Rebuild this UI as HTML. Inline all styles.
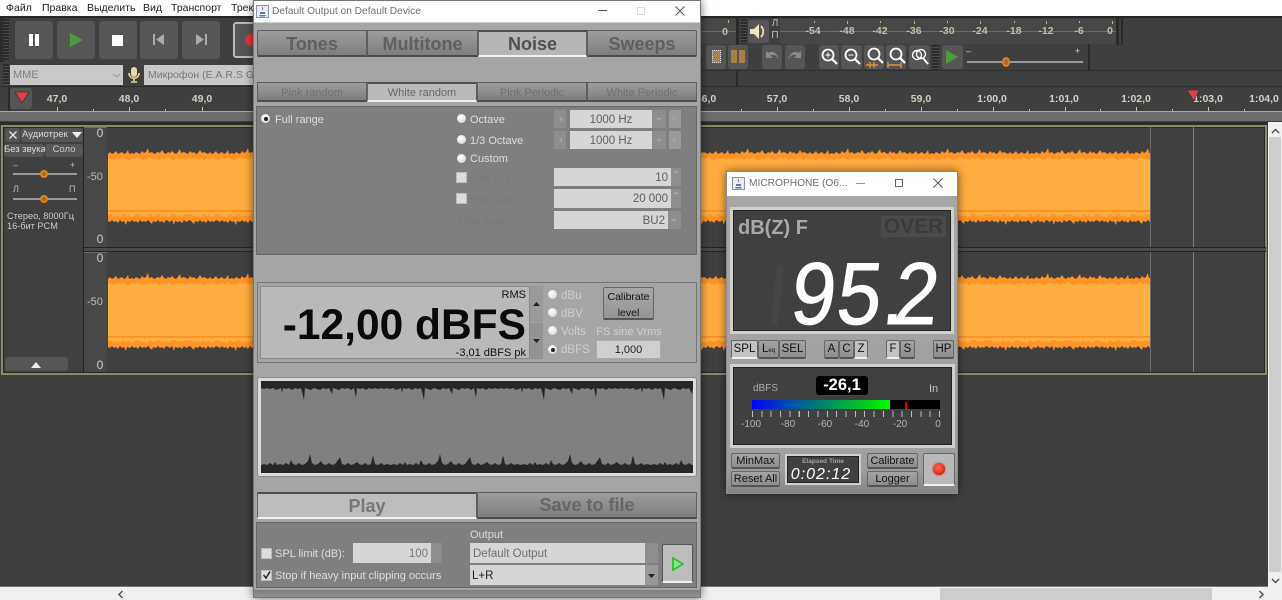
<!DOCTYPE html>
<html><head><meta charset="utf-8"><title>Audacity and REW</title>
<style>
html,body{margin:0;padding:0;width:1282px;height:600px;overflow:hidden;background:#3f3f3f}
body{position:relative;font-family:"Liberation Sans","Noto Sans CJK SC",sans-serif;font-size:11px}
.a{position:absolute;box-sizing:border-box}
.t{position:absolute;white-space:nowrap;line-height:14px}
.dlg .t{margin-top:1px}
.c{transform:translateX(-50%)}
.tb{background:#565656;border-radius:3px}
.lt{color:#d4cfc4;font-size:10.5px;font-weight:bold}
.tab{position:absolute;box-sizing:border-box;background:linear-gradient(#9d9d9d,#7e7e7e);border:1px solid #5e5e5e;border-bottom:2px solid #4c4c4c;text-align:center;color:#606060;font-weight:bold}
.tab.on{background:#b6b6b6;border-top:2px solid #4e4e4e;border-left:1px solid #666;border-bottom:2px solid #f2f2f2}
.sub{font-weight:normal;font-size:11px;color:#6f6f6f}
.sub.on{color:#686868;background:#bababa}
.f{position:absolute;box-sizing:border-box;background:#d6d6d6;color:#5f5f5f;line-height:20px;text-align:right;padding-right:3px;font-size:11.5px}
.g{position:absolute;box-sizing:border-box;background:#8d8d8d}
.rad{position:absolute;width:9px;height:9px;border-radius:50%;background:radial-gradient(circle at 40% 35%,#fff,#cfcfcf)}
.rad.s:after{content:"";position:absolute;left:2.5px;top:2.5px;width:4px;height:4px;border-radius:50%;background:#222}
.chk{position:absolute;width:9px;height:9px;background:#dcdcdc;border:1px solid #bbb;box-sizing:content-box}
.mb{position:absolute;box-sizing:border-box;background:linear-gradient(#a4a4a4,#8e8e8e);border:1px solid #666;border-bottom:2px solid #555;border-radius:2px;color:#111;text-align:center;font-size:11.5px;line-height:17px}
.mb.on{background:#c2c2c2;border-bottom:2px solid #eee}
.frm{position:absolute;box-sizing:border-box;background:#404040;border:1px solid #222;outline:2px solid #d4d4d4;outline-offset:0}
svg{position:absolute;display:block;overflow:visible}
.shadow{box-shadow:0 0 9px rgba(0,0,0,.55)}
</style></head><body>

<!-- menu -->
<div class="a" style="left:0;top:0;width:1282px;height:16px;background:#fff"></div>
<div class="t" style="left:6px;top:1px;font-size:10.5px;color:#222">Файл</div>
<div class="t" style="left:42px;top:1px;font-size:10.5px;color:#222">Правка</div>
<div class="t" style="left:87px;top:1px;font-size:10.5px;color:#222">Выделить</div>
<div class="t" style="left:143px;top:1px;font-size:10.5px;color:#222">Вид</div>
<div class="t" style="left:171px;top:1px;font-size:10.5px;color:#222">Транспорт</div>
<div class="t" style="left:231px;top:1px;font-size:10.5px;color:#222">Трек</div>
<div class="a" style="left:0;top:16px;width:1282px;height:2px;background:#262626"></div>

<!-- left toolbar -->
<div class="a" style="left:0;top:18px;width:4px;height:44px;background:#2c2c2c"></div>
<div class="a" style="left:3px;top:19px;width:6px;height:41px;background:repeating-linear-gradient(#2a2a2a 0 2px,#4c4c4c 2px 3px)"></div>
<div class="a tb" style="left:15px;top:21px;width:38px;height:38px"></div>
<div class="a" style="left:29px;top:34px;width:4px;height:12px;background:#fff"></div><div class="a" style="left:35px;top:34px;width:4px;height:12px;background:#fff"></div>
<div class="a tb" style="left:57px;top:21px;width:38px;height:38px"></div>
<svg style="left:70px;top:33px" width="14" height="14"><path d="M0 0L13 7L0 14Z" fill="#4f9a3e"/></svg>
<div class="a tb" style="left:99px;top:21px;width:38px;height:38px"></div>
<div class="a" style="left:112px;top:35px;width:11px;height:11px;background:#fff"></div>
<div class="a tb" style="left:140px;top:21px;width:38px;height:38px"></div>
<svg style="left:153px;top:34px" width="12" height="12"><path d="M0 0h2v11h-2zM11 0v11L3 5.5Z" fill="#aaa"/></svg>
<div class="a tb" style="left:182px;top:21px;width:38px;height:38px"></div>
<svg style="left:196px;top:34px" width="12" height="12"><path d="M9 0h2v11h-2zM0 0v11L8 5.5Z" fill="#aaa"/></svg>
<div class="a tb" style="left:233px;top:22px;width:30px;height:36px;border:2px solid #bbb"></div>
<div class="a" style="left:245px;top:34px;width:12px;height:12px;border-radius:50%;background:#e5343a"></div>

<div class="a" style="left:3px;top:64px;width:6px;height:21px;background:repeating-linear-gradient(#2a2a2a 0 2px,#4c4c4c 2px 3px)"></div>
<div class="a" style="left:10px;top:65px;width:113px;height:20px;background:#c9c9c9"></div>
<div class="t" style="left:13px;top:68px;color:#7c7c7c;font-size:11px">MME</div>
<svg style="left:112px;top:73px" width="9" height="5"><path d="M1 1L4.500 4L8 1" fill="none" stroke="#999"/></svg>
<svg style="left:127px;top:66px" width="14" height="18"><rect x="4" y="1" width="6" height="10" rx="3" fill="#e8d9a8"/><path d="M2 7c0 7 10 7 10 0M7 12v3M4 16h6" stroke="#e8d9a8" stroke-width="1.600" fill="none"/></svg>
<div class="a" style="left:144px;top:65px;width:109px;height:20px;background:#c9c9c9"></div>
<div class="t" style="left:148px;top:68px;color:#777;font-size:10.5px">Микрофон (E.A.R.S Gai</div>
<div class="a" style="left:0;top:86px;width:1282px;height:1px;background:#2c2c2c"></div>

<!-- ruler -->
<div class="a" style="left:8px;top:87px;width:2px;height:24px;background:#2a2a2a"></div>
<div class="a tb" style="left:10px;top:88px;width:22px;height:21px"></div>
<svg style="left:15px;top:92px" width="14" height="11"><path d="M0 0H14L7 11Z" fill="#d9434a" stroke="#222" stroke-width=".6"/></svg>
<div class="t lt c" style="left:57px;top:92px">47,0</div>
<div class="t lt c" style="left:129px;top:92px">48,0</div>
<div class="t lt c" style="left:202px;top:92px">49,0</div>
<div class="t lt c" style="left:706px;top:92px">56,0</div>
<div class="t lt c" style="left:777px;top:92px">57,0</div>
<div class="t lt c" style="left:849px;top:92px">58,0</div>
<div class="t lt c" style="left:921px;top:92px">59,0</div>
<div class="t lt c" style="left:992px;top:92px">1:00,0</div>
<div class="t lt c" style="left:1064px;top:92px">1:01,0</div>
<div class="t lt c" style="left:1136px;top:92px">1:02,0</div>
<div class="t lt c" style="left:1208px;top:92px">1:03,0</div>
<div class="t lt c" style="left:1264px;top:92px">1:04,0</div>
<svg style="left:0;top:106px" width="1282" height="5"><path stroke="#cfc5a8" stroke-width="1" d="M57.500 1v4M129.500 1v4M202.500 1v4M777.500 1v4M849.500 1v4M921.500 1v4M993.500 1v4M1065.500 1v4M1136.500 1v4M1208.500 1v4M93.500 3v2M165.500 3v2M741.500 3v2M813.500 3v2M885.500 3v2M957.500 3v2M1029.500 3v2M1100.500 3v2M1172.500 3v2M1244.500 3v2"/></svg>
<div class="a" style="left:0;top:111px;width:1282px;height:1px;background:#b5a98a"></div>
<div class="a" style="left:0;top:112px;width:1282px;height:9px;background:#6c6c6c"></div>
<svg style="left:1187px;top:90px" width="13" height="12"><path d="M0 0H12L7 11Z" fill="#d9434a" stroke="#222" stroke-width=".5"/></svg>

<!-- right toolbar -->
<div class="a" style="left:736px;top:16px;width:3px;height:29px;background:#2a2a2a"></div>
<div class="a" style="left:741px;top:19px;width:6px;height:25px;background:repeating-linear-gradient(#2a2a2a 0 2px,#4c4c4c 2px 3px)"></div>
<div class="a" style="left:700px;top:19px;width:36px;height:25px;background:#474747"></div>
<div class="a" style="left:700px;top:31px;width:36px;height:1px;background:#6b6b6b"></div>
<div class="t lt c" style="left:725px;top:25px;color:#c9bda0">0</div>
<div class="a tb" style="left:748px;top:20px;width:21px;height:23px"></div>
<svg style="left:750px;top:23px" width="17" height="17"><path d="M0 6h4L9 1v15L4 11H0Z" fill="#efe5c4"/><path d="M11 3c3 3 3 8 0 11" stroke="#efe5c4" stroke-width="1.700" fill="none"/></svg>
<div class="t c" style="left:775px;top:17px;color:#cdbf9e;font-size:10px">Л</div>
<div class="t c" style="left:775px;top:29px;color:#cdbf9e;font-size:10px">П</div>
<div class="a" style="left:780px;top:19px;width:336px;height:25px;background:#474747"></div>
<div class="a" style="left:780px;top:31px;width:336px;height:1px;background:#6b6b6b"></div>
<div class="a" style="left:1116px;top:18px;width:3px;height:27px;background:#2a2a2a"></div>
<div class="a" style="left:1121px;top:18px;width:2px;height:27px;background:#2a2a2a"></div>
<svg style="left:0;top:0" width="1282" height="30"><path stroke="#bfb49a" d="M814.500 21v2M847.500 21v3M880.500 21v2M914.500 21v3M947.500 21v2M980.500 21v3M1014.500 21v2M1046.500 21v3M1079.500 21v2M1112.500 21v3M728.500 20v3"/></svg>
<div class="t lt c" style="left:813px;top:24px;color:#c9bda0">-54</div>
<div class="t lt c" style="left:847px;top:24px;color:#c9bda0">-48</div>
<div class="t lt c" style="left:880px;top:24px;color:#c9bda0">-42</div>
<div class="t lt c" style="left:914px;top:24px;color:#c9bda0">-36</div>
<div class="t lt c" style="left:947px;top:24px;color:#c9bda0">-30</div>
<div class="t lt c" style="left:980px;top:24px;color:#c9bda0">-24</div>
<div class="t lt c" style="left:1014px;top:24px;color:#c9bda0">-18</div>
<div class="t lt c" style="left:1046px;top:24px;color:#c9bda0">-12</div>
<div class="t lt c" style="left:1079px;top:24px;color:#c9bda0">-6</div>
<div class="t lt c" style="left:1110px;top:24px;color:#c9bda0">0</div>

<div class="a tb" style="left:706px;top:45px;width:20px;height:24px"></div>
<div class="a" style="left:712px;top:50px;width:9px;height:13px;background:#a8804a;border:1px dotted #ddd"></div>
<div class="a tb" style="left:728px;top:45px;width:20px;height:24px"></div>
<div class="a" style="left:731px;top:50px;width:6px;height:13px;background:#a8804a"></div><div class="a" style="left:739px;top:50px;width:6px;height:13px;background:#a8804a"></div>
<div class="a tb" style="left:762px;top:45px;width:20px;height:24px"></div>
<svg style="left:763px;top:48px" width="18" height="16"><path d="M3 3v7h7L7.500 7.500C10 6 14 7 16 12 15 5 9 2 5.500 5Z" fill="#8a8a8a"/></svg>
<div class="a tb" style="left:785px;top:45px;width:20px;height:24px"></div>
<svg style="left:786px;top:48px" width="18" height="16"><path d="M15 3v7H8l2.500-2.500C8 6 4 7 2 12 3 5 9 2 12.500 5Z" fill="#8a8a8a"/></svg>
<div class="a tb" style="left:819px;top:45px;width:20px;height:24px"></div>
<svg style="left:820px;top:47px" width="19" height="20"><circle cx="8" cy="8" r="5.500" fill="none" stroke="#fff" stroke-width="1.800"/><path d="M12 12l5 5" stroke="#fff" stroke-width="2.200"/><path d="M5.500 8h5M8 5.500v5" stroke="#fff"/></svg>
<div class="a tb" style="left:841px;top:45px;width:21px;height:24px"></div>
<svg style="left:843px;top:47px" width="19" height="20"><circle cx="8" cy="8" r="5.500" fill="none" stroke="#fff" stroke-width="1.800"/><path d="M12 12l5 5" stroke="#fff" stroke-width="2.200"/><path d="M5.500 8h5" stroke="#fff"/></svg>
<div class="a tb" style="left:864px;top:45px;width:20px;height:24px"></div>
<svg style="left:865px;top:47px" width="19" height="21"><circle cx="9" cy="7" r="5.500" fill="none" stroke="#fff" stroke-width="1.800"/><path d="M13 11l5 5" stroke="#fff" stroke-width="2.200"/><path d="M1 18h12M5 15v6M9 15v6" stroke="#e8902c" stroke-width="1.400"/></svg>
<div class="a tb" style="left:886px;top:45px;width:20px;height:24px"></div>
<svg style="left:887px;top:47px" width="19" height="21"><circle cx="9" cy="7" r="5.500" fill="none" stroke="#fff" stroke-width="1.800"/><path d="M13 11l5 5" stroke="#fff" stroke-width="2.200"/><path d="M1 18h13M1 15v6M14 15v6" stroke="#e8902c" stroke-width="1.400"/></svg>
<div class="a tb" style="left:909px;top:45px;width:21px;height:24px"></div>
<svg style="left:911px;top:48px" width="18" height="18"><circle cx="6" cy="7" r="4.500" fill="none" stroke="#fff" stroke-width="1.400"/><circle cx="10" cy="6" r="4.500" fill="none" stroke="#fff" stroke-width="1.400"/><path d="M12 10l5 6" stroke="#fff" stroke-width="2"/></svg>
<div class="a" style="left:932px;top:45px;width:7px;height:25px;background:repeating-linear-gradient(#2a2a2a 0 2px,#4c4c4c 2px 3px)"></div>
<div class="a tb" style="left:942px;top:45px;width:21px;height:24px"></div>
<svg style="left:946px;top:50px" width="14" height="14"><path d="M0 0L12 7L0 14Z" fill="#4f9a3e"/></svg>
<div class="t" style="left:966px;top:44px;color:#ccc;font-size:9px">–</div>
<div class="t" style="left:1075px;top:44px;color:#ccc;font-size:9px">+</div>
<div class="a" style="left:967px;top:61px;width:116px;height:2px;background:#9a9a9a"></div>
<div class="a" style="left:1002px;top:57px;width:8px;height:10px;border-radius:50%;background:#a56a20;border:2px solid #e0801e"></div>
<div class="a" style="left:1088px;top:44px;width:2px;height:26px;background:#2a2a2a"></div>
<div class="a" style="left:736px;top:70px;width:2px;height:17px;background:#2a2a2a"></div>
<div class="a" style="left:701px;top:70px;width:581px;height:1px;background:#2e2e2e"></div>
<div class="a" style="left:701px;top:86px;width:581px;height:1px;background:#2e2e2e"></div>

<!-- track -->
<div class="a" style="left:0;top:122px;width:1282px;height:3px;background:#2c2c2c"></div>
<div class="a" style="left:1px;top:125px;width:1266px;height:250px;background:#404040;border:2px solid #8b8b62;outline:1px solid #2a2a2a;outline-offset:-3px"></div>
<div class="a" style="left:83px;top:127px;width:1px;height:246px;background:#222"></div>
<div class="a" style="left:84px;top:127px;width:23px;height:120px;background:#484848;border-top:1px solid #6a6a6a"></div>
<div class="a" style="left:84px;top:252px;width:23px;height:120px;background:#484848;border-top:1px solid #6a6a6a"></div>
<div class="a" style="left:84px;top:247px;width:1182px;height:1px;background:#242424"></div>
<div class="a" style="left:84px;top:248px;width:1182px;height:3px;background:#4a4a4a"></div>
<div class="a" style="left:84px;top:251px;width:1182px;height:1px;background:#242424"></div>
<div class="a tb" style="left:5px;top:128px;width:15px;height:14px"></div>
<svg style="left:9px;top:131px" width="8" height="8"><path d="M.5.500l7 7M7.500.500l-7 7" stroke="#e8e8e8" stroke-width="1.300"/></svg>
<div class="a tb" style="left:21px;top:128px;width:62px;height:14px"></div>
<div class="t" style="left:22px;top:128px;color:#ddd;font-size:9.500px">Аудиотрек</div>
<svg style="left:72px;top:132px" width="10" height="6"><path d="M0 0H10L5 6Z" fill="#eee"/></svg>
<div class="a tb" style="left:4px;top:144px;width:40px;height:13px"></div>
<div class="t" style="left:4px;top:143px;color:#ddd;font-size:9.500px">Без звука</div>
<div class="a tb" style="left:45px;top:144px;width:38px;height:13px"></div>
<div class="t c" style="left:64px;top:143px;color:#ccc;font-size:9.500px">Соло</div>
<div class="t" style="left:13px;top:158px;color:#bbb;font-size:9px">–</div><div class="t" style="left:70px;top:158px;color:#bbb;font-size:9px">+</div>
<div class="a" style="left:13px;top:173px;width:64px;height:2px;background:#9a9a9a"></div>
<div class="a" style="left:40px;top:170px;width:8px;height:8px;border-radius:50%;background:#a56a20;border:2px solid #e0801e"></div>
<div class="t" style="left:13px;top:182px;color:#bbb;font-size:9px">Л</div><div class="t" style="left:69px;top:182px;color:#bbb;font-size:9px">П</div>
<div class="a" style="left:13px;top:198px;width:64px;height:2px;background:#9a9a9a"></div>
<div class="a" style="left:40px;top:195px;width:8px;height:8px;border-radius:50%;background:#a56a20;border:2px solid #e0801e"></div>
<div class="t" style="left:7px;top:209px;color:#ccc;font-size:9.200px">Стерео, 8000Гц</div>
<div class="t" style="left:7px;top:219px;color:#ccc;font-size:9.200px">16-бит PCM</div>
<div class="a tb" style="left:5px;top:357px;width:63px;height:14px"></div>
<svg style="left:31px;top:362px" width="11" height="6"><path d="M0 6H10L5 0Z" fill="#eee"/></svg>

<div class="t c" style="left:100px;top:126px;color:#ccc;font-size:12px">0</div>
<div class="t" style="left:87px;top:170px;color:#bbb;font-size:11px">-50</div>
<div class="t c" style="left:100px;top:232px;color:#ccc;font-size:12px">0</div>
<div class="t c" style="left:100px;top:251px;color:#ccc;font-size:12px">0</div>
<div class="t" style="left:87px;top:295px;color:#bbb;font-size:11px">-50</div>
<div class="t c" style="left:100px;top:358px;color:#ccc;font-size:12px">0</div>

<svg style="left:0;top:0" width="1282" height="600">
<defs>
<pattern id="jt" width="100" height="16" patternUnits="userSpaceOnUse">
<polygon fill="#ff9326" points="0,16 0,7 2,5 4,7 6,6 8,4 10,7 12,6 14,5 16,7 18,6 20,3 21,7 24,6 26,7 28,5 30,6 32,7 34,4 36,6 38,5 40,1 41,6 44,5 46,7 48,6 50,5 52,6 54,3 56,6 58,7 60,5 62,6 64,4 66,6 68,7 70,5 72,2 73,6 76,5 78,6 80,7 82,4 84,6 86,5 88,7 90,6 92,3 94,6 96,5 98,6 100,7 100,16"/>
</pattern>
<pattern id="mt" width="90" height="8" patternUnits="userSpaceOnUse">
<polygon fill="#ffae40" points="0,8 0,3 3,2 6,4 9,2 12,3 15,1 18,3 21,4 24,2 27,3 30,1 33,3 36,4 39,3 42,1 45,3 48,2 51,4 54,2 57,3 60,1 63,3 66,4 69,2 72,3 75,2 78,4 81,2 84,3 87,2 90,3 90,8"/>
</pattern>
<pattern id="mb" width="80" height="8" patternUnits="userSpaceOnUse">
<polygon fill="#ffae40" points="0,0 0,3 3,2 6,4 9,3 12,5 15,2 18,4 21,3 24,5 27,3 30,2 33,4 36,3 39,5 42,2 45,4 48,3 51,2 54,4 57,3 60,5 63,3 66,2 69,4 72,3 75,4 78,2 80,3 80,0"/>
</pattern>
<pattern id="jb" width="110" height="16" patternUnits="userSpaceOnUse">
<polygon fill="#ff9326" points="0,0 0,11 2,12 4,10 6,12 8,11 10,13 12,10 14,12 16,11 18,15 19,11 22,12 24,10 26,12 28,11 30,13 32,10 34,12 36,11 38,12 40,10 42,12 44,14 45,11 48,12 50,10 52,12 54,11 56,13 58,10 60,11 62,12 64,10 66,15 67,11 70,12 72,11 74,13 76,10 78,12 80,11 82,10 84,12 86,14 87,11 90,12 92,10 94,12 96,11 98,13 100,10 102,12 104,11 106,12 108,10 110,11 110,0"/>
</pattern>
<pattern id="dt" width="120" height="22" patternUnits="userSpaceOnUse">
<polygon fill="#262626" points="0,0 0,7 3,8 6,7 9,8 12,7 15,9 18,8 20,7 21,12 22,7 25,8 28,7 31,9 34,7 37,8 40,7 43,19 44,7 47,8 50,9 53,7 56,8 59,9 62,7 65,8 68,7 71,13 72,7 75,8 78,9 81,7 84,8 87,7 90,9 93,7 95,17 96,7 99,8 102,7 105,9 108,7 111,8 114,7 117,8 120,7 120,0"/>
</pattern>
<pattern id="db" width="130" height="22" patternUnits="userSpaceOnUse">
<polygon fill="#262626" points="0,22 0,14 3,13 6,14 9,12 12,14 14,11 16,14 19,13 22,14 25,12 28,14 30,9 32,13 35,14 38,12 41,14 44,13 47,10 49,3 51,12 54,14 57,13 60,10 62,13 65,14 68,12 71,14 74,13 77,9 79,6 81,13 84,14 87,12 90,14 93,13 96,11 98,13 101,14 104,12 107,14 110,13 112,4 114,13 117,14 120,12 123,14 126,13 130,14 130,22"/>
</pattern>
</defs>
<rect x="108" y="158" width="1042" height="56" fill="#ffae40"/>
<g transform="translate(108,147)"><rect width="1042" height="16" fill="url(#jt)"/></g>
<g transform="translate(108,156)"><rect width="1042" height="8" fill="url(#mt)"/></g>
<g transform="translate(108,210)"><rect width="1042" height="16" fill="url(#jb)"/></g>
<g transform="translate(108,212)"><rect width="1042" height="8" fill="url(#mb)"/></g>
<rect x="108" y="283" width="1042" height="57" fill="#ffae40"/>
<g transform="translate(108,272)"><rect width="1042" height="16" fill="url(#jt)"/></g>
<g transform="translate(108,281)"><rect width="1042" height="8" fill="url(#mt)"/></g>
<g transform="translate(108,336)"><rect width="1042" height="16" fill="url(#jb)"/></g>
<g transform="translate(108,338)"><rect width="1042" height="8" fill="url(#mb)"/></g>
<path d="M1150.500 127V247M1150.500 252V372" stroke="#6d6d6d"/>
<path d="M1193.500 127V247M1193.500 252V372" stroke="#8f7a7a"/>
</svg>

<!-- scrollbars -->
<div class="a" style="left:1268px;top:122px;width:14px;height:465px;background:#f0f0f0"></div>
<div class="a" style="left:1269px;top:137px;width:12px;height:435px;background:#cdcdcd"></div>
<svg style="left:1271px;top:128px" width="9" height="6"><path d="M1 5L4.500 1.500L8 5" stroke="#555" stroke-width="1.500" fill="none"/></svg>
<svg style="left:1271px;top:578px" width="9" height="6"><path d="M1 1L4.500 4.500L8 1" stroke="#555" stroke-width="1.500" fill="none"/></svg>
<div class="a" style="left:0;top:587px;width:1268px;height:13px;background:#f0f0f0"></div>
<div class="a" style="left:0;top:586px;width:1268px;height:1px;background:#777"></div>
<div class="a" style="left:1268px;top:587px;width:14px;height:13px;background:#f0f0f0"></div>
<div class="a" style="left:940px;top:588px;width:272px;height:12px;background:#cdcdcd"></div>
<svg style="left:117px;top:590px" width="7" height="9"><path d="M5.500 1L2 4.500L5.500 8" stroke="#555" stroke-width="1.500" fill="none"/></svg>
<svg style="left:1258px;top:590px" width="7" height="9"><path d="M1.500 1L5 4.500L1.500 8" stroke="#555" stroke-width="1.500" fill="none"/></svg>

<div class="dlg">
<!-- Generator window -->
<div class="a shadow" style="left:253px;top:0;width:448px;height:598px;background:#a5a5a5;border:1px solid #777"></div>
<div class="a" style="left:254px;top:1px;width:446px;height:21px;background:#fff"></div>
<div class="a" style="left:254px;top:22px;width:446px;height:1px;background:#d0d0d0"></div>
<svg style="left:256px;top:5px" width="13" height="13"><rect x=".5" y=".5" width="12" height="12" fill="#e9eef6" stroke="#8a93a5"/><path d="M3 10h7l-1 1.500H4ZM4 9h5V7H4Z" fill="#4a7fb5"/><path d="M6 2c1 1 0 2 1 3" stroke="#d8632b" fill="none"/></svg>
<div class="t" style="left:272px;top:4px;color:#707070;font-size:10.200px">Default Output on Default Device</div>
<div class="a" style="left:598px;top:10px;width:9px;height:1px;background:#555"></div>
<div class="a" style="left:637px;top:7px;width:8px;height:8px;border:1px solid #ddd"></div>
<svg style="left:675px;top:6px" width="10" height="10"><path d="M.5.500l9 9M9.500.500l-9 9" stroke="#555"/></svg>

<div class="tab" style="left:257px;top:30px;width:110px;height:27px;font-size:18px;line-height:27px;border-radius:2px 0 0 2px">Tones</div>
<div class="tab" style="left:367px;top:30px;width:111px;height:27px;font-size:18px;line-height:27px">Multitone</div>
<div class="tab on" style="left:478px;top:30px;width:109px;height:27px;font-size:18px;line-height:25px;color:#505050">Noise</div>
<div class="tab" style="left:587px;top:30px;width:110px;height:27px;font-size:18px;line-height:27px;border-radius:0 2px 2px 0">Sweeps</div>
<div class="tab sub" style="left:257px;top:82px;width:110px;height:20px;line-height:20px">Pink random</div>
<div class="tab sub on" style="left:367px;top:82px;width:110px;height:20px;line-height:18px">White random</div>
<div class="tab sub" style="left:477px;top:82px;width:110px;height:20px;line-height:20px">Pink Periodic</div>
<div class="tab sub" style="left:587px;top:82px;width:110px;height:20px;line-height:20px">White Periodic</div>

<div class="a" style="left:256px;top:106px;width:441px;height:149px;background:#7f7f7f;border:1px solid #666"></div>
<div class="rad s" style="left:261px;top:114px"></div>
<div class="t" style="left:275px;top:112px;color:#dedede">Full range</div>
<div class="rad" style="left:457px;top:114px"></div>
<div class="t" style="left:470px;top:112px;color:#dedede">Octave</div>
<div class="rad" style="left:457px;top:135px"></div>
<div class="t" style="left:470px;top:133px;color:#dedede">1/3 Octave</div>
<div class="rad" style="left:457px;top:154px"></div>
<div class="t" style="left:470px;top:151px;color:#dedede">Custom</div>
<div class="chk" style="left:456px;top:172px"></div>
<div class="t" style="left:470px;top:171px;color:#797979">Low Cut</div>
<div class="chk" style="left:456px;top:193px"></div>
<div class="t" style="left:470px;top:192px;color:#797979">High Cut</div>
<div class="t" style="left:457px;top:213px;color:#797979">Filter type</div>

<div class="g" style="left:554px;top:110px;width:12px;height:18px"></div>
<div class="f" style="left:570px;top:110px;width:82px;height:18px;text-align:center;padding:0">1000 Hz</div>
<div class="g" style="left:652px;top:110px;width:14px;height:18px"></div>
<div class="g" style="left:669px;top:110px;width:12px;height:18px;background:#9a9a9a"></div>
<div class="g" style="left:554px;top:131px;width:12px;height:18px"></div>
<div class="f" style="left:570px;top:131px;width:82px;height:18px;text-align:center;padding:0">1000 Hz</div>
<div class="g" style="left:652px;top:131px;width:14px;height:18px"></div>
<div class="g" style="left:669px;top:131px;width:12px;height:18px;background:#9a9a9a"></div>
<div class="f" style="left:554px;top:168px;width:117px;height:18px">10</div>
<div class="g" style="left:671px;top:168px;width:10px;height:18px"></div>
<div class="f" style="left:554px;top:189px;width:117px;height:19px">20 000</div>
<div class="g" style="left:671px;top:189px;width:10px;height:19px"></div>
<div class="f" style="left:554px;top:211px;width:114px;height:18px">BU2</div>
<div class="g" style="left:668px;top:211px;width:13px;height:18px"></div>
<svg style="left:0;top:0" width="700" height="240"><path fill="#a6a6a6" d="M562 116v6l-3-3ZM656 118h6l-3 3ZM673 116v6l3-3ZM562 137v6l-3-3ZM656 139h6l-3 3ZM673 137v6l3-3ZM673 173h6l-3-3ZM673 194h6l-3-3ZM671 219h6l-3 3Z"/></svg>

<!-- level -->
<div class="a" style="left:257px;top:282px;width:440px;height:81px;border:1px solid #777"></div>
<div class="a" style="left:260px;top:286px;width:270px;height:73px;background:#b9b9b9;border:1px solid #8a8a8a"></div>
<div class="t" style="right:756px;top:287px;color:#111;font-size:11px">RMS</div>
<div class="t" style="right:756px;top:300px;color:#0a0a0a;font-size:42.500px;font-weight:bold;line-height:50px">-12,00 dBFS</div>
<div class="t" style="right:756px;top:345px;color:#111;font-size:11px">-3,01 dBFS pk</div>
<div class="g" style="left:530px;top:286px;width:13px;height:36px;background:#9a9a9a"></div>
<div class="g" style="left:530px;top:323px;width:13px;height:36px;background:#939393"></div>
<svg style="left:533px;top:302px" width="7" height="4"><path d="M0 4H7L3.500 0Z" fill="#222"/></svg>
<svg style="left:533px;top:339px" width="7" height="4"><path d="M0 0H7L3.500 4Z" fill="#222"/></svg>
<div class="rad" style="left:548px;top:290px"></div><div class="t" style="left:561px;top:288px;color:#d0d0d0;font-size:11.500px">dBu</div>
<div class="rad" style="left:548px;top:308px"></div><div class="t" style="left:561px;top:306px;color:#d0d0d0;font-size:11.500px">dBV</div>
<div class="rad" style="left:548px;top:326px"></div><div class="t" style="left:561px;top:324px;color:#d0d0d0;font-size:11.500px">Volts</div>
<div class="rad s" style="left:548px;top:345px"></div><div class="t" style="left:561px;top:342px;color:#d0d0d0;font-size:11.500px">dBFS</div>
<div class="mb" style="left:603px;top:287px;width:51px;height:33px;line-height:16px;padding-top:1px;color:#111;font-size:10.500px;background:linear-gradient(#a8a8a8,#959595)">Calibrate<br>level</div>
<div class="t c" style="left:629px;top:324px;color:#cfcfcf;font-size:11px">FS sine Vrms</div>
<div class="a" style="left:596px;top:340px;width:65px;height:19px;background:#cfcfcf;border:1px solid #aaa;color:#222;text-align:center;line-height:18px;font-size:11px">1,000</div>

<!-- waveform -->
<div class="a" style="left:258px;top:378px;width:438px;height:98px;background:#dcdcdc;border-radius:2px;box-shadow:0 0 0 1px #8a8a8a"></div>
<svg style="left:0;top:0" width="1282" height="600">
<rect x="261" y="381" width="432" height="92" fill="#808080"/>
<g transform="translate(261,381)"><rect width="432" height="22" fill="url(#dt)"/></g>
<g transform="translate(261,451)"><rect width="432" height="22" fill="url(#db)"/></g>
</svg>

<div class="tab on" style="left:257px;top:492px;width:220px;height:27px;font-size:18px;line-height:24px;color:#777;background:#bdbdbd">Play</div>
<div class="tab" style="left:477px;top:492px;width:220px;height:27px;font-size:18px;line-height:25px;color:#666">Save to file</div>

<div class="a" style="left:256px;top:522px;width:441px;height:66px;background:#7f7f7f;border:1px solid #666"></div>
<div class="chk" style="left:261px;top:548px"></div>
<div class="t" style="left:275px;top:546px;color:#dedede">SPL limit (dB):</div>
<div class="f" style="left:353px;top:543px;width:78px;height:20px;line-height:22px;color:#777">100</div>
<div class="g" style="left:431px;top:543px;width:11px;height:20px"></div>
<div class="chk" style="left:261px;top:570px"></div>
<svg style="left:262px;top:570px" width="10" height="10"><path d="M1.500 5l2.500 3L8 1.500" stroke="#222" stroke-width="1.500" fill="none"/></svg>
<div class="t" style="left:275px;top:568px;color:#dedede">Stop if heavy input clipping occurs</div>
<div class="t" style="left:470px;top:527px;color:#dedede">Output</div>
<div class="f" style="left:470px;top:543px;width:175px;height:20px;line-height:22px;text-align:left;padding-left:3px;color:#707070">Default Output</div>
<div class="g" style="left:645px;top:543px;width:13px;height:20px"></div>
<div class="f" style="left:470px;top:565px;width:175px;height:20px;line-height:22px;text-align:left;padding-left:2px;color:#222">L+R</div>
<div class="g" style="left:645px;top:565px;width:13px;height:20px;background:#999"></div>
<svg style="left:648px;top:574px" width="7" height="4"><path d="M0 0H7L3.500 4Z" fill="#222"/></svg>
<div class="a" style="left:662px;top:544px;width:31px;height:39px;background:#bdbdbd;border:1px solid #555;border-bottom:2px solid #f2f2f2;border-radius:2px"></div>
<svg style="left:672px;top:557px" width="13" height="14"><path d="M1 1L11 7L1 13Z" fill="#8fe08a" stroke="#1cc21c" stroke-width="1.600"/></svg>
<div class="a" style="left:254px;top:590px;width:446px;height:7px;background:linear-gradient(#7e7e7e,#939393)"></div>

<!-- Meter window -->
<div class="a shadow" style="left:726px;top:171px;width:232px;height:323px;background:linear-gradient(#a8a8a8,#9f9f9f 92%,#858585);border:1px solid #8a8a8a"></div>
<div class="a" style="left:727px;top:172px;width:230px;height:24px;background:#fff"></div>
<svg style="left:732px;top:177px" width="13" height="13"><rect x=".5" y=".5" width="12" height="12" fill="#e9eef6" stroke="#8a93a5"/><path d="M3 10h7l-1 1.500H4ZM4 9h5V7H4Z" fill="#4a7fb5"/><path d="M6 2c1 1 0 2 1 3" stroke="#d8632b" fill="none"/></svg>
<div class="t" style="left:749px;top:176px;color:#707070;font-size:10.200px">MICROPHONE (O6...</div>
<div class="a" style="left:856px;top:183px;width:9px;height:1px;background:#999"></div>
<div class="a" style="left:895px;top:179px;width:8px;height:8px;border:1px solid #666"></div>
<svg style="left:933px;top:178px" width="10" height="10"><path d="M.5.500l9 9M9.500.500l-9 9" stroke="#555"/></svg>

<div class="frm" style="left:733px;top:210px;width:218px;height:121px;background:#404040;outline:3px solid #cfcfcf"></div>
<div class="t" style="left:738px;top:217px;color:#a9a9a9;font-size:20px;font-weight:bold;line-height:20px">dB(Z) F</div>
<div class="a" style="left:881px;top:216px;width:65px;height:21px;background:#4a4a4a;color:#3a3a3a;font-size:21px;font-weight:bold;line-height:21px;text-align:center">OVER</div>
<div class="a" style="left:774px;top:265px;width:7px;height:60px;background:#454545;transform:skewX(-6deg)"></div>
<div class="t" style="left:792px;top:245px;color:#fff;font-size:88px;line-height:96px;letter-spacing:2px;transform-origin:0 50%;transform:skewX(-6deg) scaleX(.9);-webkit-text-stroke:1px #fff">9<span>5</span><span style="letter-spacing:-12px">.</span>2</div>

<div class="mb on" style="left:731px;top:340px;width:27px;height:19px">SPL</div>
<div class="mb" style="left:758px;top:340px;width:21px;height:19px">L<span style="font-size:6px">eq</span></div>
<div class="mb" style="left:779px;top:340px;width:27px;height:19px">SEL</div>
<div class="mb" style="left:824px;top:340px;width:15px;height:19px">A</div>
<div class="mb" style="left:839px;top:340px;width:15px;height:19px">C</div>
<div class="mb on" style="left:854px;top:340px;width:14px;height:19px">Z</div>
<div class="mb on" style="left:886px;top:340px;width:14px;height:19px">F</div>
<div class="mb" style="left:900px;top:340px;width:15px;height:19px">S</div>
<div class="mb" style="left:933px;top:340px;width:21px;height:19px">HP</div>

<div class="frm" style="left:733px;top:367px;width:219px;height:78px;background:#404040;outline:3px solid #cfcfcf"></div>
<div class="t" style="left:753px;top:381px;color:#aaa;font-size:10px">dBFS</div>
<div class="a" style="left:816px;top:376px;width:52px;height:19px;background:#000;border-radius:3px;color:#fff;font-weight:bold;font-size:16.500px;line-height:19px;text-align:center">-26,1</div>
<div class="t" style="left:929px;top:381px;color:#c4c4c4;font-size:11px">In</div>
<div class="a" style="left:752px;top:400px;width:188px;height:9px;background:#000"></div>
<div class="a" style="left:752px;top:400px;width:138px;height:9px;background:linear-gradient(90deg,#0000ff,#0048b0 25%,#008c60 55%,#00e010 90%,#00ff00)"></div>
<div class="a" style="left:905px;top:402px;width:2px;height:7px;background:#e00000"></div>
<div class="a" style="left:752px;top:411px;width:188px;height:6px;background:repeating-linear-gradient(90deg,#bdbdbd 0 1px,transparent 1px 9.350px)"></div>
<div class="t c" style="left:751px;top:417px;color:#b5b5b5;font-size:10px">-100</div>
<div class="t c" style="left:788px;top:417px;color:#b5b5b5;font-size:10px">-80</div>
<div class="t c" style="left:825px;top:417px;color:#b5b5b5;font-size:10px">-60</div>
<div class="t c" style="left:862px;top:417px;color:#b5b5b5;font-size:10px">-40</div>
<div class="t c" style="left:900px;top:417px;color:#b5b5b5;font-size:10px">-20</div>
<div class="t c" style="left:938px;top:417px;color:#b5b5b5;font-size:10px">0</div>

<div class="mb" style="left:731px;top:453px;width:49px;height:16px;line-height:15px;font-size:11px">MinMax</div>
<div class="mb" style="left:731px;top:471px;width:49px;height:16px;line-height:14px;font-size:11px">Reset All</div>
<div class="frm" style="left:787px;top:456px;width:72px;height:27px;background:#404040;outline:2px solid #cfcfcf"></div>
<div class="t c" style="left:823px;top:456px;color:#a5a5a5;font-size:6.500px;font-weight:bold;line-height:10px">Elapsed Time</div>
<div class="t c" style="left:821px;top:465px;color:#fff;font-size:16px;font-style:italic;line-height:18px;letter-spacing:1px">0:02:12</div>
<div class="mb" style="left:867px;top:453px;width:51px;height:16px;line-height:15px;font-size:11px">Calibrate</div>
<div class="mb" style="left:867px;top:471px;width:51px;height:16px;line-height:14px;font-size:11px">Logger</div>
<div class="a" style="left:923px;top:453px;width:32px;height:33px;background:#b9b9b9;border:1px solid #666;border-bottom:2px solid #f0f0f0;border-radius:2px"></div>
<div class="a" style="left:933px;top:463px;width:12px;height:12px;border-radius:50%;background:radial-gradient(circle at 45% 40%,#ff7a5a,#e02010 70%,#a01808);box-shadow:0 0 2px #c33"></div>
</div>

</body></html>
